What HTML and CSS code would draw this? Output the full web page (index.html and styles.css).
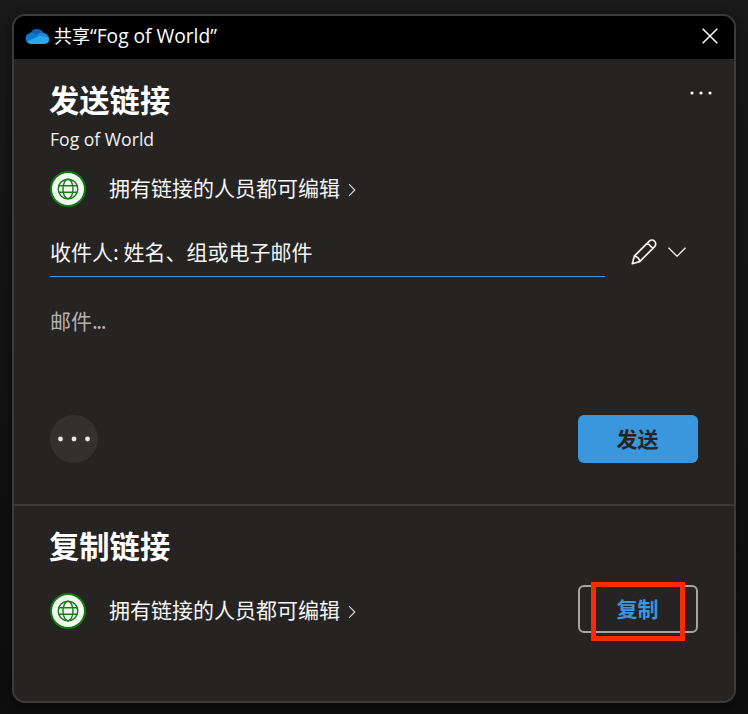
FILE: index.html
```html
<!DOCTYPE html>
<html lang="zh-CN">
<head>
<meta charset="utf-8">
<title>共享</title>
<link rel="stylesheet" href="styles.css">
</head>
<body>
<svg class="defs" width="0" height="0" aria-hidden="true">
  <symbol id="globe" viewBox="0 0 36 36">
    <circle cx="18" cy="18" r="17" fill="#f1faf1" stroke="#107c10" stroke-width="2"/>
    <g fill="none" stroke="#1b7a1b" stroke-width="1.4">
      <circle cx="18" cy="18" r="9.8"/>
      <ellipse cx="18" cy="18" rx="5" ry="9.8"/>
      <path d="M8.7 14.8h18.6M8.7 21.2h18.6"/>
    </g>
  </symbol>
  <symbol id="chevron" viewBox="0 0 8 14">
    <path d="M1 1.2 6.8 7 1 12.8" fill="none" stroke="#ddd" stroke-width="1.1"/>
  </symbol>
</svg>
<main class="dialog">
  <header class="titlebar">
    <svg class="cloud" viewBox="0 0 24 16">
      <path d="M5.3 5.2A7.4 7.4 0 0 1 18.6 5L12 11 3 10z" fill="#0f62b4"/>
      <path d="M5.4 4.9C7.6 4.6 9 5.4 14.5 9L4 15.3A5.4 5.4 0 0 1 5.4 4.9z" fill="#0c78d2"/>
      <path d="M11.5 7.4C14 5 16.5 4.6 18.6 5A5.5 5.5 0 0 1 23.8 10.4L16 12z" fill="#1687df"/>
      <path d="M1.8 13.4 14.2 7.9 23.2 9A4.3 4.3 0 0 1 19.8 16H5.7A5.4 5.4 0 0 1 1.8 13.4z" fill="#29a5ec"/>
    </svg>
    <span class="title">共享<span class="latin">“Fog of World”</span></span>
    <svg class="close" viewBox="0 0 16 16"><path d="M.7.7l14.6 14.6M15.3.7.7 15.3" stroke="#fff" stroke-width="1.5"/></svg>
  </header>

  <section class="send">
    <div class="heading-row">
      <h1>发送链接</h1>
      <svg class="more" viewBox="0 0 22 4" fill="#fff"><circle cx="2" cy="2" r="1.6"/><circle cx="11" cy="2" r="1.6"/><circle cx="20" cy="2" r="1.6"/></svg>
    </div>
    <p class="file">Fog of World</p>
    <div class="permission">
      <svg class="globe"><use href="#globe"/></svg>
      <span class="who">拥有链接的人员都可编辑</span>
      <svg class="chevron"><use href="#chevron"/></svg>
    </div>
    <div class="recipient">
      <div class="field">收件人: 姓名、组或电子邮件</div>
      <svg class="pencil" viewBox="0 0 26 26" fill="none" stroke="#f3f2f1" stroke-width="1.7" stroke-linejoin="round">
        <path d="M1.3 24.7 3.3 17.2 18.3 2.2A3.7 3.7 0 0 1 23.6 7.6L8.7 22.6zM3.3 17.2C6.3 17.6 8.3 19.5 8.7 22.6M16.5 4 21.8 9.3"/>
      </svg>
      <svg class="caret" viewBox="0 0 18 10"><path d="M.5.7 9 9.2 17.5.7" fill="none" stroke="#f3f2f1" stroke-width="1.3"/></svg>
    </div>
    <div class="message">邮件<span class="dots">...</span></div>
    <div class="actions">
      <svg class="options" viewBox="0 0 48 48"><circle cx="24" cy="24" r="24" fill="#323130"/><g fill="#e8e8e8"><circle cx="10.5" cy="24" r="2.4"/><circle cx="24" cy="24" r="2.4"/><circle cx="37.5" cy="24" r="2.4"/></g></svg>
      <button class="btn primary">发送</button>
    </div>
  </section>

  <section class="copy">
    <h2>复制链接</h2>
    <div class="copy-row">
      <div class="permission">
        <svg class="globe"><use href="#globe"/></svg>
        <span class="who">拥有链接的人员都可编辑</span>
        <svg class="chevron"><use href="#chevron"/></svg>
      </div>
      <div class="copy-action">
        <button class="btn outline">复制</button>
        <span class="highlight"></span>
      </div>
    </div>
  </section>
</main>
</body>
</html>
```
FILE: styles.css
```css
* { box-sizing: border-box; }

body {
  margin: 0;
  height: 714px;
  padding: 14px 12px 11px;
  overflow: hidden;
  background: linear-gradient(#191919, #131313 45%, #0e0e0e);
  color: #fff;
  font-family: "Noto Sans", "Noto Sans CJK SC", sans-serif;
}

svg { display: block; flex: none; }
.defs { position: absolute; }

.dialog {
  width: 724px;
  height: 689px;
  border: 2px solid #3b3b3b;
  border-radius: 13px;
  overflow: hidden;
  background: #252423;
  box-shadow: 0 3px 12px rgba(0, 0, 0, .45);
}

.titlebar {
  display: flex;
  align-items: center;
  height: 43px;
  padding: 0 16.5px 0 11px;
  background: #000;
}
.cloud { width: 24px; height: 16px; margin-top: -3px; }
.title {
  flex: 1;
  margin: -5px 0 0 5px;
  font: 400 18px/40px "Noto Sans CJK SC", sans-serif;
  white-space: nowrap;
}
.latin { font-family: "Open Sans", sans-serif; font-size: 19.2px; line-height: 1; }
.close { width: 16px; height: 16px; margin-top: -3px; }

.send {
  height: 447px;
  padding: 22px 36px 0;
  border-bottom: 2px solid #3b3a39;
}
.heading-row { display: flex; justify-content: space-between; height: 40px; }
h1, h2 {
  margin: -1px 0 0 -1px;
  font: 700 30.3px/38px "Noto Sans CJK SC", sans-serif;
  white-space: nowrap;
}
.more { width: 22px; height: 4px; margin: 10px -14px 0 0; }
.file {
  margin: 6px 0 20px;
  font: 400 17.6px/24px "Open Sans", sans-serif;
  color: #f3f2f1;
}
.permission { display: flex; align-items: center; height: 36px; }
.globe { width: 36px; height: 36px; }
.who, .field, .message {
  font: 400 21px/36px "Noto Sans CJK SC", sans-serif;
  color: #f6f5f4;
  white-space: nowrap;
}
.who { margin: -4px 0 0 23px; }
.chevron { width: 8px; height: 14px; margin: 2px 0 0 8px; }

.recipient { display: flex; align-items: center; height: 48px; margin-top: 22px; }
.field {
  width: 555px;
  height: 48px;
  line-height: 44px;
  border-bottom: 1px solid #3a96dd;
}
.pencil { width: 26px; height: 26px; margin: -3px 0 0 26px; }
.caret { width: 18px; height: 10px; margin: -2px 0 0 11px; }
.message { height: 36px; margin-top: 26px; line-height: 34px; color: #b5b3b1; }
.dots { letter-spacing: -1.5px; }

.actions { display: flex; justify-content: space-between; margin-top: 76px; }
.options { width: 48px; height: 48px; }
.btn {
  display: block;
  width: 120px;
  height: 48px;
  padding: 0 1px 2px 0;
  border: 0;
  border-radius: 6px;
  font: 700 21px/46px "Noto Sans CJK SC", sans-serif;
}
.primary { background: #3a96dd; color: #252423; }
.outline { border: 2px solid #a6a5a4; background: transparent; color: #3a96dd; line-height: 42px; }

.copy { padding: 21px 36px 0; }
.copy-row { display: flex; justify-content: space-between; align-items: center; margin-top: 21px; }
.copy-row .permission { margin-top: 4px; }
.copy-action { position: relative; }
.highlight {
  position: absolute;
  left: 13px;
  top: -3px;
  width: 94px;
  height: 59px;
  border: 5px solid #f72a0c;
}
```
